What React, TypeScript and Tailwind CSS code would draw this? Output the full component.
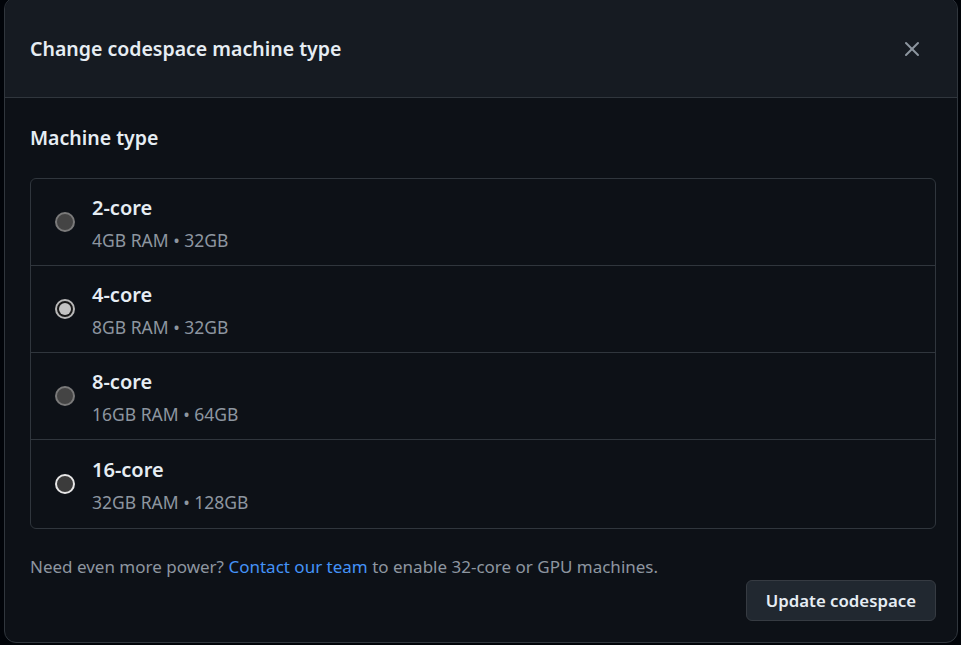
import { X } from "lucide-react"

type Machine = {
  name: string
  spec: string
  state: "idle" | "checked" | "hover"
}

const machines: Machine[] = [
  { name: "2-core", spec: "4GB RAM • 32GB", state: "idle" },
  { name: "4-core", spec: "8GB RAM • 32GB", state: "checked" },
  { name: "8-core", spec: "16GB RAM • 64GB", state: "idle" },
  { name: "16-core", spec: "32GB RAM • 128GB", state: "hover" },
]

function Radio({ state }: { state: Machine["state"] }) {
  if (state === "checked") {
    return (
      <span className="flex h-[20px] w-[20px] shrink-0 items-center justify-center rounded-full border-2 border-[#b8b8b8] bg-[#1a1a1a]">
        <span className="h-[12px] w-[12px] rounded-full bg-[#c4c4c4]" />
      </span>
    )
  }
  return (
    <span
      className={
        state === "hover"
          ? "block h-[20px] w-[20px] shrink-0 rounded-full border-2 border-[#e6e6e6] bg-[#3b3b3b]"
          : "block h-[20px] w-[20px] shrink-0 rounded-full border-2 border-[#7a7a7a] bg-[#444444]"
      }
    />
  )
}

export default function App() {
  return (
    <div className="h-[645px] w-[961px] overflow-hidden bg-[#010409] pl-[4px] pr-[3px] font-['Noto_Sans','Open_Sans',sans-serif]">
      <div className="-mt-[3px] flex h-[646px] flex-col overflow-hidden rounded-xl border border-[#30363d] bg-[#0d1117]">
        <header className="flex h-[100px] shrink-0 items-center justify-between border-b border-[#30363d] bg-[#161b22] pl-[25px] pr-[33px] pt-[2px]">
          <h1 className="text-[19.5px] font-semibold text-[#e6edf3]">Change codespace machine type</h1>
          <X className="h-[24px] w-[24px] text-[#8d96a0]" strokeWidth={2} />
        </header>

        <div className="flex flex-col pl-[25px] pr-[21px] pt-[26px]">
          <h2 className="text-[19.5px] font-semibold leading-[28px] text-[#e6edf3]">Machine type</h2>

          <div className="mt-[26px] flex flex-col rounded-md border border-[#30363d]">
            {machines.map((m, i) => (
              <div
                key={m.name}
                className={
                  i < machines.length - 1
                    ? "flex h-[87px] items-center gap-[17px] border-b border-[#30363d] pl-[24px]"
                    : "flex h-[88px] items-center gap-[17px] pl-[24px]"
                }
              >
                <Radio state={m.state} />
                <div className="flex flex-col pt-[1px]">
                  <span className="text-[20px] font-semibold leading-[26px] text-[#e6edf3]">{m.name}</span>
                  <span className="mt-[8px] text-[17.5px] leading-[22px] text-[#8d96a0]">{m.spec}</span>
                </div>
              </div>
            ))}
          </div>

          <p className="mt-[26px] text-[17px] leading-[24px] text-[#8d96a0]">
            Need even more power? <span className="text-[#4493f8]">Contact our team</span> to enable 32-core or GPU
            machines.
          </p>

          <div className="mt-[1px] flex justify-end">
            <button className="h-[41px] rounded-md border border-[#363b42] bg-[#212830] px-[19px] text-[16.8px] font-semibold text-[#e6edf3]">
              Update codespace
            </button>
          </div>
        </div>
      </div>
    </div>
  )
}
